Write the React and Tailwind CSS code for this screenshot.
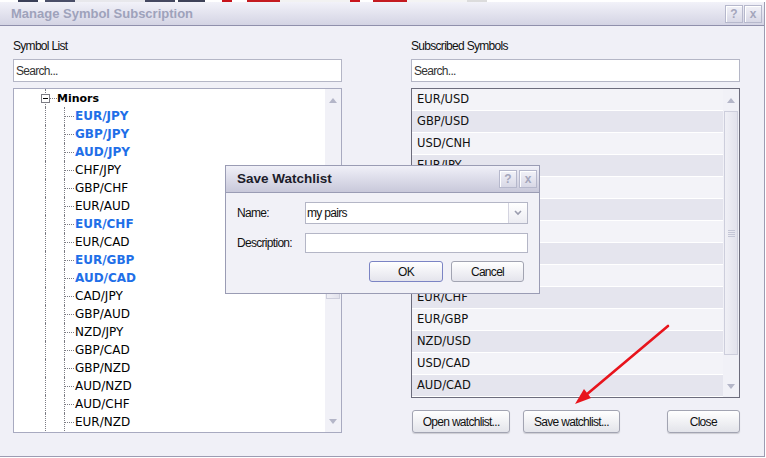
import React from 'react';

const sans = "font-['Liberation_Sans',Arial,sans-serif] text-[12px] tracking-[-0.7px] text-[#111]";
const dv = "font-['DejaVu_Sans',Verdana,sans-serif]";

const treeItems = [
  { name: 'EUR/JPY', sub: true },
  { name: 'GBP/JPY', sub: true },
  { name: 'AUD/JPY', sub: true },
  { name: 'CHF/JPY' },
  { name: 'GBP/CHF' },
  { name: 'EUR/AUD' },
  { name: 'EUR/CHF', sub: true },
  { name: 'EUR/CAD' },
  { name: 'EUR/GBP', sub: true },
  { name: 'AUD/CAD', sub: true },
  { name: 'CAD/JPY' },
  { name: 'GBP/AUD' },
  { name: 'NZD/JPY' },
  { name: 'GBP/CAD' },
  { name: 'GBP/NZD' },
  { name: 'AUD/NZD' },
  { name: 'AUD/CHF' },
  { name: 'EUR/NZD' },
];

const subscribed = [
  'EUR/USD', 'GBP/USD', 'USD/CNH', 'EUR/JPY', 'USD/JPY', 'GBP/JPY', 'AUD/USD',
  'USD/CHF', 'AUD/JPY', 'EUR/CHF', 'EUR/GBP', 'NZD/USD', 'USD/CAD', 'AUD/CAD',
];

const strip = [
  [18, '#fff'], [20, '#3a3f58'], [7, '#fff'], [30, '#4a4e68'], [70, '#e8e8ec'],
  [30, '#444860'], [3, '#fff'], [27, '#3e4258'], [17, '#fff'], [10, '#c8141c'],
  [15, '#fff'], [33, '#c41a20'], [70, '#f2f2f2'], [10, '#c8141c'], [13, '#fff'],
  [34, '#c41a20'], [60, '#f4f4f4'], [20, '#dcdcdc'], [279, '#fff'],
];

function TitleBtn({ children }) {
  return (
    <div className="w-[18px] h-[18px] border border-[#b6b8cc] bg-gradient-to-b from-[#f2f2f8] to-[#d8d8e6] flex items-center justify-center font-['Liberation_Sans',Arial,sans-serif] font-bold text-[12px] text-[#a4a6bc] shadow-[inset_1px_1px_0_#fff]">
      {children}
    </div>
  );
}

function Arrow({ down }) {
  return (
    <svg width="8" height="5" viewBox="0 0 8 5">
      <polygon points={down ? '0,0 8,0 4,5' : '0,5 8,5 4,0'} fill="#b4b6c8" />
    </svg>
  );
}

function Scrollbar({ thumbTop, thumbHeight, grip }) {
  return (
    <div className="w-[16px] shrink-0 flex flex-col bg-[#f1f1f7]">
      <div className="h-[22px] flex items-center justify-center"><Arrow /></div>
      <div className="flex-1 flex flex-col">
        <div
          className="mx-[1px] border border-[#cdcedc] bg-gradient-to-r from-[#f0f0f6] to-[#e2e2ec] flex items-center justify-center"
          style={{ marginTop: thumbTop, height: thumbHeight }}
        >
          {grip && (
            <div className="flex flex-col gap-[1px]">
              <div className="w-[7px] h-px bg-[#c4c6d6]" />
              <div className="w-[7px] h-px bg-[#c4c6d6]" />
              <div className="w-[7px] h-px bg-[#c4c6d6]" />
              <div className="w-[7px] h-px bg-[#c4c6d6]" />
            </div>
          )}
        </div>
      </div>
      <div className="h-[22px] flex items-center justify-center"><Arrow down /></div>
    </div>
  );
}

function Button({ children, className = '' }) {
  return (
    <div className={`h-[23px] rounded-[3px] border border-[#a2a4b2] bg-gradient-to-b from-white to-[#e3e4ea] shadow-[0_1px_1px_rgba(0,0,0,0.15)] flex items-center justify-center ${sans} ${className}`}>
      {children}
    </div>
  );
}

function TreeRow({ item }) {
  return (
    <div className="flex h-[18px]">
      <div className="w-[31px] shrink-0" />
      <div className="w-[19px] shrink-0 border-l border-dotted border-[#7c7c84]" />
      <div className="w-[11px] shrink-0 border-l border-dotted border-[#7c7c84] flex items-center">
        <div className="w-[9px] border-t border-dotted border-[#7c7c84]" />
      </div>
      <span
        className={`${dv} leading-[19px] ${item.sub ? 'font-bold text-[#1f6fe8] text-[12px]' : 'text-black text-[12px]'}`}
      >
        {item.name}
      </span>
    </div>
  );
}

export default function App() {
  return (
    <div className="relative w-[766px] h-[458px] overflow-hidden bg-white">
      <div className="flex h-[2px]">
        {strip.map(([w, c], i) => (
          <div key={i} style={{ width: w, background: c }} />
        ))}
      </div>

      <div className="w-[765px] h-[455px] flex flex-col border-r border-b border-[#9c9cb2] bg-[#f0f0f7]">
        {/* Title bar */}
        <div className="h-[24px] shrink-0 flex items-center justify-between border-b border-[#9090ac] bg-gradient-to-b from-[#f2f2f9] to-[#d4d4e4] pl-[11px] pr-[2px]">
          <span className="font-['Liberation_Sans',Arial,sans-serif] font-bold text-[13px] text-[#9ea2bb]">
            Manage Symbol Subscription
          </span>
          <div className="flex gap-[1px]">
            <TitleBtn>?</TitleBtn>
            <TitleBtn>x</TitleBtn>
          </div>
        </div>

        {/* Body */}
        <div className="flex pl-[13px] gap-[69px]">
          {/* Symbol List */}
          <div className="w-[329px] flex flex-col">
            <div className={`${sans} leading-[14px] mt-[13px]`}>Symbol List</div>
            <div className={`mt-[6px] h-[23px] border border-[#b4b6c6] bg-white flex items-center pl-[2px] ${sans} text-[#333]`}>
              Search...
            </div>
            <div className="mt-[6px] h-[345px] border border-[#a8aac0] bg-white flex">
              <div className="flex-1 flex flex-col">
                <div className="flex h-[18px] items-center">
                  <div className="w-[27px] shrink-0" />
                  <div className="relative w-[9px] self-stretch">
                    <div className="absolute left-[4px] top-0 bottom-0 border-l border-dotted border-[#7c7c84]" />
                    <div className="absolute left-0 top-[5px] w-[9px] h-[9px] border border-[#7c7c84] bg-white flex items-center justify-center">
                      <div className="w-[5px] h-px bg-black" />
                    </div>
                  </div>
                  <div className="w-[7px] border-t border-dotted border-[#7c7c84]" />
                  <span className={`${dv} font-bold text-[11px] text-black leading-[19px]`}>Minors</span>
                </div>
                {treeItems.map((it) => (
                  <TreeRow key={it.name} item={it} />
                ))}
              </div>
              <Scrollbar thumbTop={64} thumbHeight={124} />
            </div>
          </div>

          {/* Subscribed Symbols */}
          <div className="w-[329px] flex flex-col">
            <div className={`${sans} leading-[14px] mt-[13px]`}>Subscribed Symbols</div>
            <div className={`mt-[6px] h-[23px] border border-[#b4b6c6] bg-white flex items-center pl-[2px] ${sans} text-[#333]`}>
              Search...
            </div>
            <div className="mt-[6px] h-[310px] border border-[#6c6c7c] bg-[#f1f1f7] flex">
              <div className="flex-1 flex flex-col">
                {subscribed.map((s, i) => (
                  <div
                    key={s}
                    className={`h-[22px] shrink-0 border-b border-white flex items-center pl-[5px] pt-[1px] ${dv} text-[11.5px] text-[#111] ${i % 2 ? 'bg-[#e5e5ee]' : 'bg-[#f3f3f8]'}`}
                  >
                    {s}
                  </div>
                ))}
              </div>
              <Scrollbar thumbTop={0} thumbHeight={244} grip />
            </div>
            <div className="mt-[12px] flex">
              <Button className="ml-[1px] w-[99px]">Open watchlist...</Button>
              <Button className="ml-[13px] w-[97px]">Save watchlist...</Button>
              <Button className="ml-[47px] w-[74px]">Close</Button>
            </div>
          </div>
        </div>
      </div>

      {/* Save Watchlist dialog */}
      <div className="absolute left-[225px] top-[165px] w-[315px] h-[129px] border border-[#9a9cb4] bg-[#f1f1f7] flex flex-col">
        <div className="h-[27px] shrink-0 border-b border-[#9a9cb4] bg-gradient-to-b from-[#f0f0f8] to-[#c8c8da] flex items-center justify-between pl-[11px] pr-[2px]">
          <span className="font-['Liberation_Sans',Arial,sans-serif] font-bold text-[13.5px] text-[#1c1c2a]">
            Save Watchlist
          </span>
          <div className="flex gap-[2px]">
            <TitleBtn>?</TitleBtn>
            <TitleBtn>x</TitleBtn>
          </div>
        </div>
        <div className="flex flex-col pl-[11px] pr-[11px] pt-[9px]">
          <div className="flex items-center">
            <div className={`w-[68px] ${sans}`}>Name:</div>
            <div className="flex-1 h-[22px] border border-[#b4b6c6] bg-white flex">
              <div className={`flex-1 flex items-center pl-[1px] ${sans} tracking-[-0.2px]`}>my pairs</div>
              <div className="w-[19px] border-l border-[#d4d4e0] bg-gradient-to-b from-white to-[#ececf2] flex items-center justify-center">
                <svg width="8" height="6" viewBox="0 0 8 6">
                  <polyline points="1,1 4,4 7,1" fill="none" stroke="#9a9cae" strokeWidth="1.6" />
                </svg>
              </div>
            </div>
          </div>
          <div className="flex items-center mt-[9px]">
            <div className={`w-[68px] ${sans}`}>Description:</div>
            <div className="flex-1 h-[20px] border border-[#b4b6c6] bg-white" />
          </div>
          <div className="flex justify-end mt-[8px] pr-[4px] gap-[8px]">
            <div className={`w-[74px] h-[21px] rounded-[3px] border border-[#7b84c4] bg-gradient-to-b from-white to-[#e4e4ec] flex items-center justify-center ${sans}`}>OK</div>
            <div className={`w-[73px] h-[21px] rounded-[3px] border border-[#a2a4b2] bg-gradient-to-b from-white to-[#e4e4ec] flex items-center justify-center ${sans}`}>Cancel</div>
          </div>
        </div>
      </div>

      {/* Red arrow annotation */}
      <svg className="absolute left-0 top-0 pointer-events-none" width="766" height="458">
        <line x1="668" y1="326" x2="586" y2="395" stroke="#e8141c" strokeWidth="2.6" strokeLinecap="round" />
        <polygon points="575,404 584,389 591,398" fill="#e8141c" />
      </svg>
    </div>
  );
}
